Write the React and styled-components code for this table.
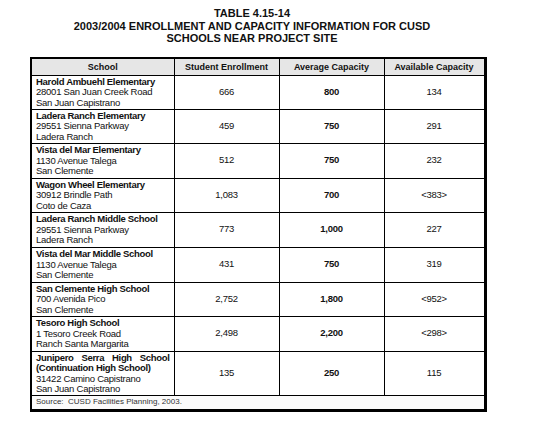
import React from "react";
import styled, { createGlobalStyle } from "styled-components";

const Global = createGlobalStyle`
  html, body { margin: 0; padding: 0; background: #fff; }
  body { font-family: "Liberation Sans", Arial, sans-serif; color: #111; }
`;

const Page = styled.div`
  width: 534px;
  height: 427px;
  padding: 7px 0 0 30px;
  box-sizing: border-box;
`;

const Title = styled.div`
  width: 444px;
  text-align: center;
  font-weight: bold;
  font-size: 11px;
  line-height: 12.5px;
  margin-bottom: 12px;
`;

const Table = styled.table`
  border-collapse: collapse;
  table-layout: fixed;
  width: 454px;
  border-top: 2px solid #000;
  border-left: 2px solid #000;
  border-right: 3px solid #000;
  border-bottom: 3px solid #000;
  font-size: 9.5px;
  letter-spacing: -0.25px;
`;

const Th = styled.th`
  background: #e6e6e6;
  font-weight: bold;
  font-size: 9px;
  letter-spacing: 0;
  height: 16px;
  padding: 0;
  border: 1px solid #000;
  text-align: center;
  vertical-align: middle;
`;

const Td = styled.td`
  border: 1px solid #000;
  padding: ${(p) => (p.$school ? "1px 4px 0 4px" : "0")};
  height: ${(p) => p.$h}px;
  text-align: ${(p) => (p.$school ? "left" : "center")};
  vertical-align: middle;
  font-weight: ${(p) => (p.$bold ? "bold" : "normal")};
  line-height: 10.5px;
  box-sizing: border-box;
`;

const Name = styled.div`
  font-weight: bold;
  letter-spacing: -0.32px;
  text-align: ${(p) => (p.$justify ? "justify" : "left")};
  text-align-last: ${(p) => (p.$justify ? "justify" : "auto")};
`;

const Line = styled.div``;

const SourceCell = styled.td`
  border: 1px solid #000;
  height: 13px;
  padding: 0 4px;
  font-size: 8px;
  letter-spacing: 0;
  color: #333;
  line-height: 12px;
  background: #fbfbfb;
`;

const rows = [
  { name: ["Harold Ambuehl Elementary"], addr: ["28001 San Juan Creek Road", "San Juan Capistrano"], e: "666", a: "800", v: "134", h: 34 },
  { name: ["Ladera Ranch Elementary"], addr: ["29551 Sienna Parkway", "Ladera Ranch"], e: "459", a: "750", v: "291", h: 34 },
  { name: ["Vista del Mar Elementary"], addr: ["1130 Avenue Talega", "San Clemente"], e: "512", a: "750", v: "232", h: 35 },
  { name: ["Wagon Wheel Elementary"], addr: ["30912 Brindle Path", "Coto de Caza"], e: "1,083", a: "700", v: "<383>", h: 34 },
  { name: ["Ladera Ranch Middle School"], addr: ["29551 Sienna Parkway", "Ladera Ranch"], e: "773", a: "1,000", v: "227", h: 35 },
  { name: ["Vista del Mar Middle School"], addr: ["1130 Avenue Talega", "San Clemente"], e: "431", a: "750", v: "319", h: 35 },
  { name: ["San Clemente High School"], addr: ["700 Avenida Pico", "San Clemente"], e: "2,752", a: "1,800", v: "<952>", h: 34 },
  { name: ["Tesoro High School"], addr: ["1 Tesoro Creek Road", "Ranch Santa Margarita"], e: "2,498", a: "2,200", v: "<298>", h: 35 },
  { name: ["Junipero Serra High School", "(Continuation High School)"], addr: ["31422 Camino Capistrano", "San Juan Capistrano"], e: "135", a: "250", v: "115", h: 44, justify: true },
];

export default function App() {
  return (
    <Page>
      <Global />
      <Title>
        <div>TABLE 4.15-14</div>
        <div>2003/2004 ENROLLMENT AND CAPACITY INFORMATION FOR CUSD</div>
        <div>SCHOOLS NEAR PROJECT SITE</div>
      </Title>
      <Table>
        <colgroup>
          <col style={{ width: 143 }} />
          <col style={{ width: 105 }} />
          <col style={{ width: 105 }} />
          <col style={{ width: 101 }} />
        </colgroup>
        <thead>
          <tr>
            <Th>School</Th>
            <Th>Student Enrollment</Th>
            <Th>Average Capacity</Th>
            <Th>Available Capacity</Th>
          </tr>
        </thead>
        <tbody>
          {rows.map((r, i) => (
            <tr key={i}>
              <Td $school $h={r.h}>
                {r.name.map((n, j) => (
                  <Name key={j} $justify={r.justify && j === 0}>{n}</Name>
                ))}
                {r.addr.map((a, j) => (
                  <Line key={j}>{a}</Line>
                ))}
              </Td>
              <Td $h={r.h}>{r.e}</Td>
              <Td $h={r.h} $bold>{r.a}</Td>
              <Td $h={r.h}>{r.v}</Td>
            </tr>
          ))}
          <tr>
            <SourceCell colSpan={4}>Source:&nbsp; CUSD Facilities Planning, 2003.</SourceCell>
          </tr>
        </tbody>
      </Table>
    </Page>
  );
}
